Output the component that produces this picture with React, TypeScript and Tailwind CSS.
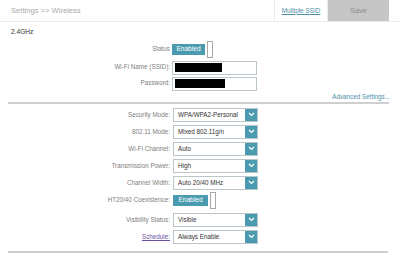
const teal = 'bg-[#4a9bb0]'

const Label = ({ children, link }: { children: React.ReactNode; link?: boolean }) => (
  <div className="w-[170px] shrink-0 text-right text-[6.3px] leading-none text-[#808080]">
    {link ? <span className="text-[#6b4fa3] underline">{children}</span> : children}
  </div>
)

const Toggle = ({ w }: { w: string }) => (
  <div className="flex items-center h-[17px]">
    <div className={`${teal} ${w} h-[11px] flex items-center justify-center text-white text-[6.6px] leading-none`}>
      Enabled
    </div>
    <div className="ml-[2px] w-[6px] h-[17px] bg-white border border-[#a8a8a8]" />
  </div>
)

const Select = ({ value }: { value: string }) => (
  <div className="ml-[3px] w-[85px] h-[14px] flex border border-[#b9c6ca] bg-white">
    <div className="flex-1 flex items-center pl-[4px] text-[6.3px] leading-none text-[#333]">{value}</div>
    <div className={`${teal} w-[12px] h-full flex items-center justify-center`}>
      <svg width="7" height="5" viewBox="0 0 7 5" fill="none">
        <path d="M1 1l2.5 2.5L6 1" stroke="white" strokeWidth="1.2" />
      </svg>
    </div>
  </div>
)

const selects = [
  { label: 'Security Mode:', value: 'WPA/WPA2-Personal' },
  { label: '802.11 Mode:', value: 'Mixed 802.11g/n' },
  { label: 'Wi-Fi Channel:', value: 'Auto' },
  { label: 'Transmission Power:', value: 'High' },
  { label: 'Channel Width:', value: 'Auto 20/40 MHz' },
]

export default function App() {
  return (
    <div className="w-[400px] h-[253px] bg-white overflow-hidden" style={{ fontFamily: '"Liberation Sans", Arial, sans-serif' }}>
      {/* Header */}
      <div className="h-[22px] flex border-b border-[#ececec]">
        <div className="flex-1 flex items-center pl-[11px] text-[7.6px] text-[#a9a9a9]">Settings &gt;&gt; Wireless</div>
        <div className="w-[54px] flex items-center justify-center border-x border-[#ececec] text-[6.4px] text-[#4d8fa5] underline">
          Multiple SSID
        </div>
        <div className="w-[61px] flex items-center justify-center bg-[#c6c6c6] text-[7.5px] text-[#8e8e8e]">Save</div>
        <div className="w-[11px]" />
      </div>

      <div className="pl-[11px] mt-[7px] text-[6.6px] leading-none text-[#333]">2.4GHz</div>

      {/* Status */}
      <div className="flex items-center mt-[5px] h-[17px]">
        <Label>Status</Label>
        <div className="ml-[2px]">
          <Toggle w="w-[33px]" />
        </div>
      </div>

      <div className="flex items-center mt-[3px] h-[14px]">
        <Label>Wi-Fi Name (SSID):</Label>
        <div className="ml-[2px] w-[85px] h-[14px] border border-[#b9c6ca] flex items-center pl-[2px]">
          <div className="w-[47px] h-[9px] bg-black" />
        </div>
      </div>

      <div className="flex items-center mt-[2px] h-[14px]">
        <Label>Password:</Label>
        <div className="ml-[2px] w-[85px] h-[14px] border border-[#b9c6ca] flex items-center pl-[2px]">
          <div className="w-[50px] h-[9px] bg-black" />
        </div>
      </div>

      <div className="mt-[3px] pr-[10px] text-right text-[6.3px] leading-none text-[#4d8fa5]">Advanced Settings...</div>

      <div className="ml-[8px] mr-[11px] mt-[2px] h-[2px] bg-[#cfcfcf]" />

      {/* Selects */}
      <div className="mt-[4px] flex flex-col gap-[3px]">
        {selects.map((s) => (
          <div key={s.label} className="flex items-center">
            <Label>{s.label}</Label>
            <Select value={s.value} />
          </div>
        ))}
      </div>

      <div className="flex items-center mt-[2px] h-[17px]">
        <Label>HT20/40 Coexistence:</Label>
        <div className="ml-[3px]">
          <Toggle w="w-[35px]" />
        </div>
      </div>

      <div className="mt-[4px] flex flex-col gap-[3px]">
        <div className="flex items-center">
          <Label>Visibility Status:</Label>
          <Select value="Visible" />
        </div>
        <div className="flex items-center">
          <Label link>Schedule:</Label>
          <Select value="Always Enable" />
        </div>
      </div>

      <div className="ml-[8px] mr-[12px] mt-[7px] h-[2px] bg-[#cfcfcf]" />
    </div>
  )
}
